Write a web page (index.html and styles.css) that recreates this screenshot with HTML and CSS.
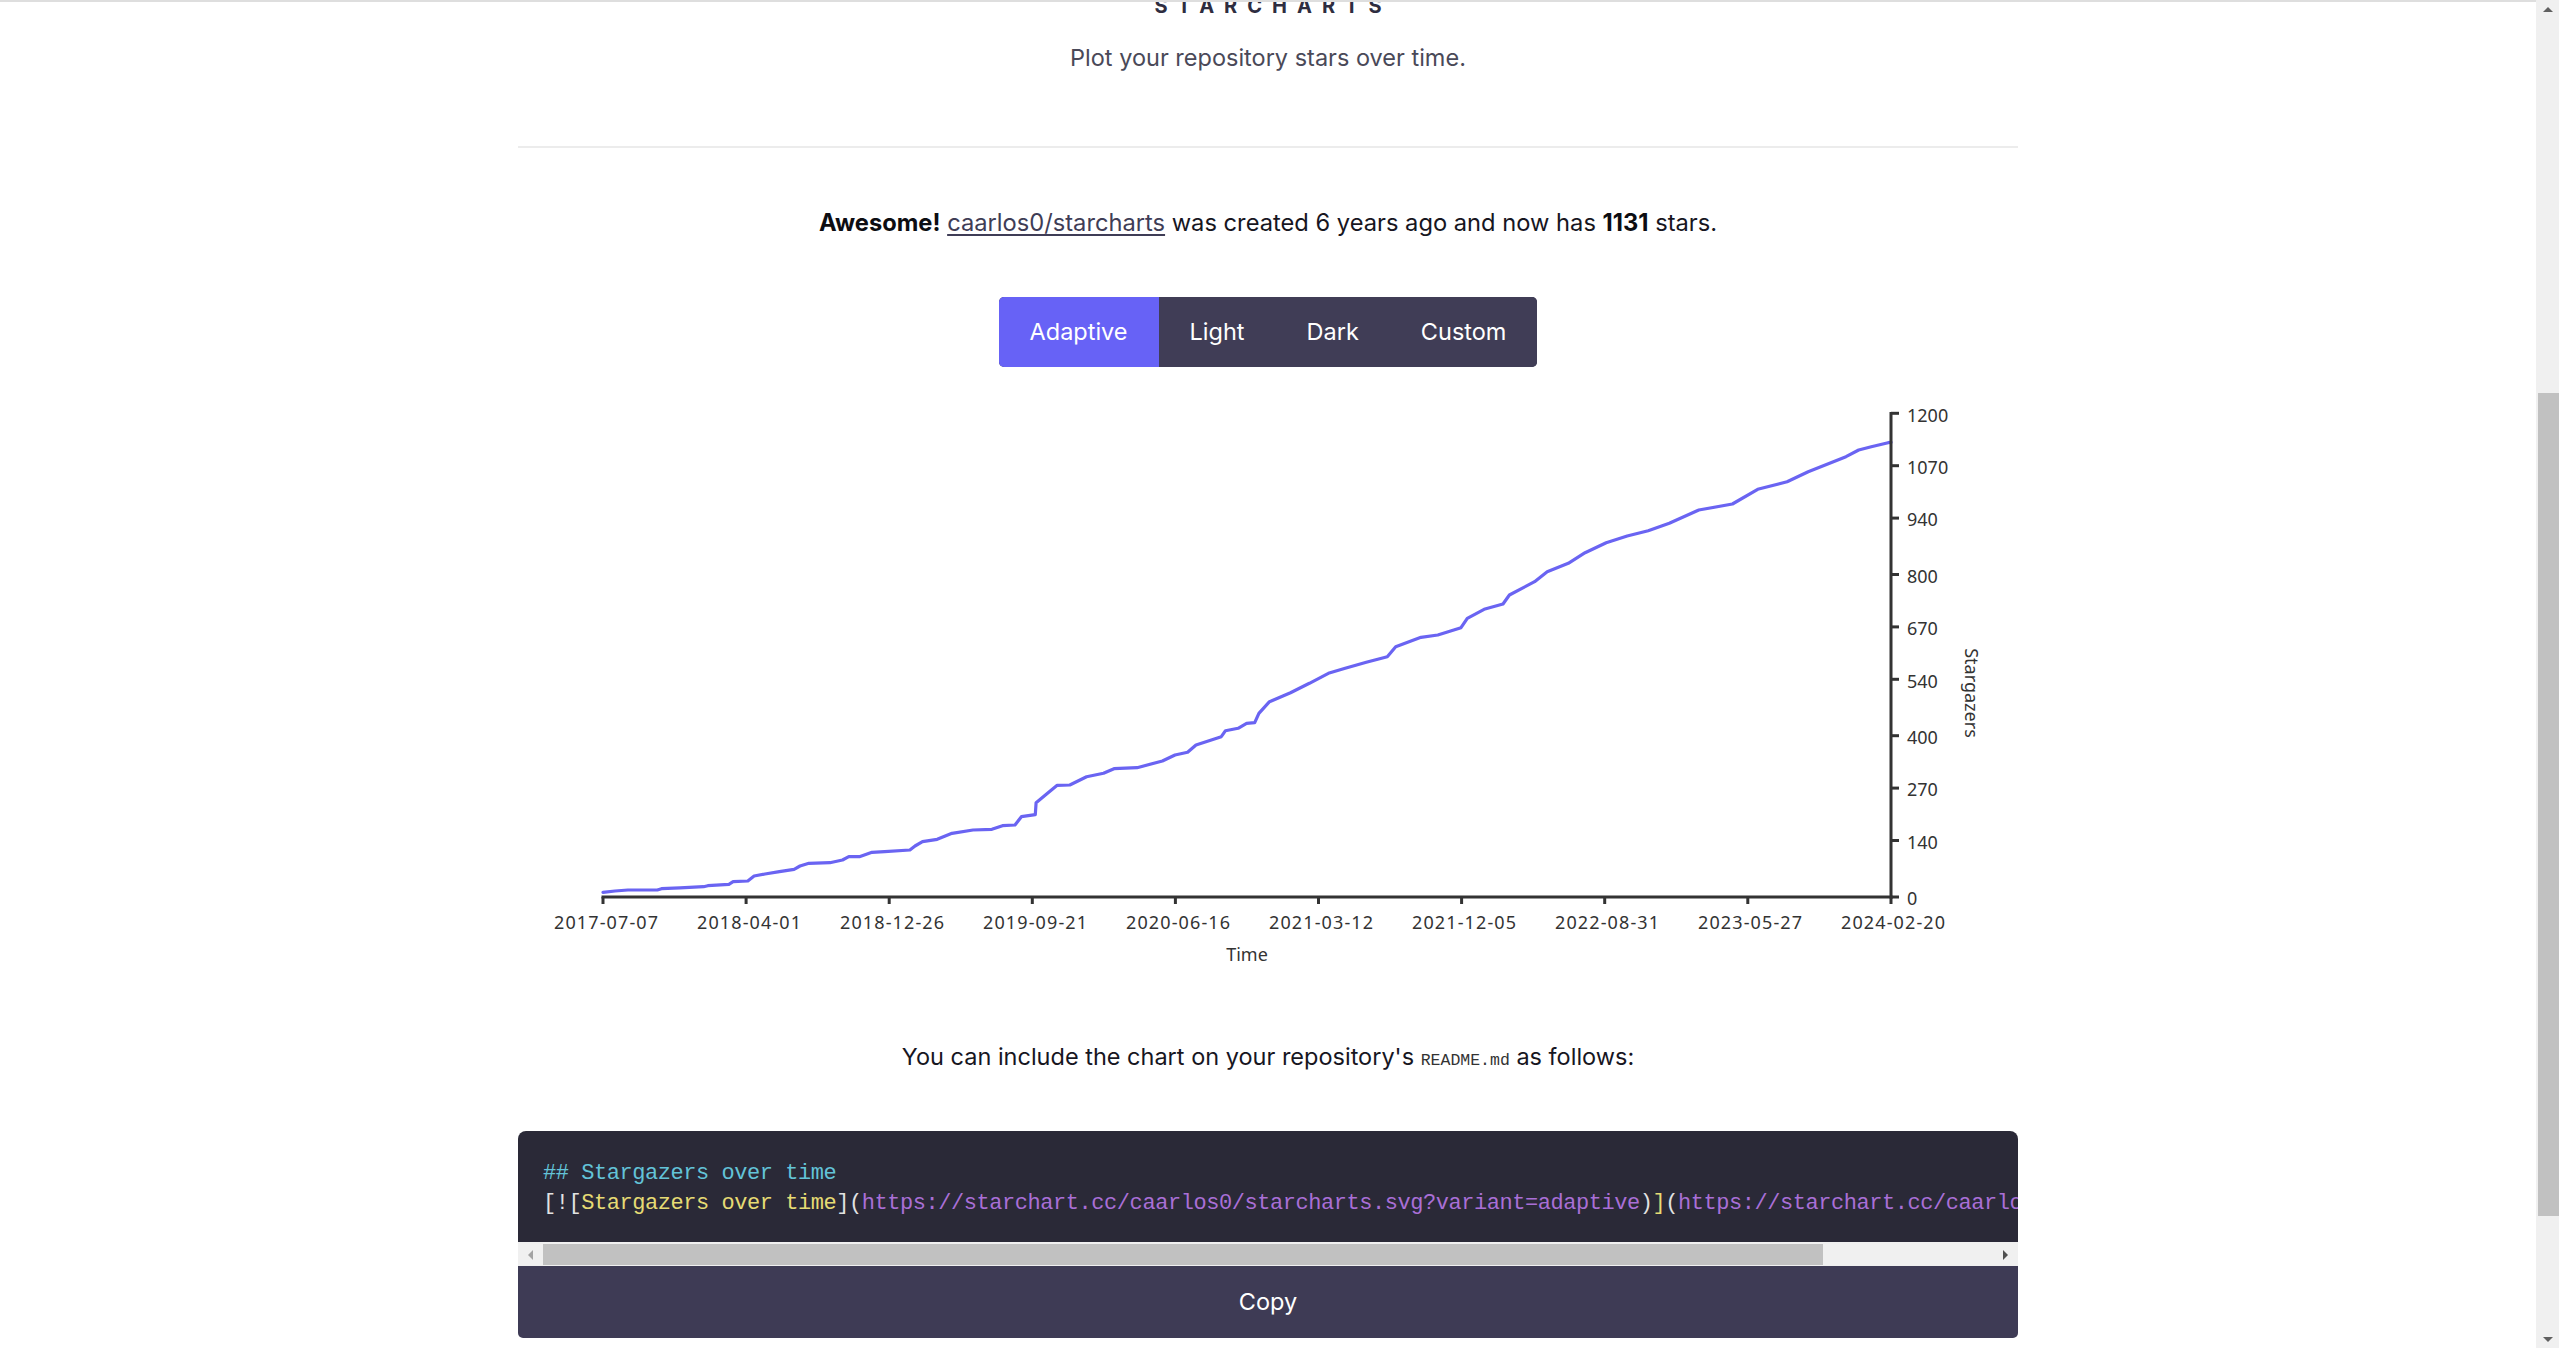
FILE: index.html
```html
<!DOCTYPE html>
<html lang="en">
<head>
<meta charset="utf-8">
<title>Starcharts</title>
<link rel="stylesheet" href="styles.css">
</head>
<body>
<div class="window">
  <main class="page">
    <div class="container">
      <header class="header">
        <h1 class="title">Starcharts</h1>
        <p class="subtitle">Plot your repository stars over time.</p>
      </header>
      <hr class="divider">
      <p class="summary"><strong>Awesome!</strong> <a href="#" class="repo-link">caarlos0/starcharts</a> was created 6 years ago and now has <strong>1131</strong> stars.</p>
      <div class="variants">
        <button class="variant active">Adaptive</button>
        <button class="variant">Light</button>
        <button class="variant">Dark</button>
        <button class="variant">Custom</button>
      </div>
      <svg class="chart" viewBox="518 400 1500 570" width="1500" height="570" xmlns="http://www.w3.org/2000/svg">
        <polyline class="series" points="603,892.3 615,891 627.9,890 657.3,890 661.5,888.7 680,887.8 703.6,886.7 707.8,885.7 728.9,884.3 733.1,881.7 747.8,881 754.1,876 765,874 779.4,871.7 794.1,869.3 800,866 808.9,863.3 829.9,862.7 842.5,860 848.8,856.7 859.4,856.7 872,852.3 884.6,851.7 909.9,850 915,846 922.5,841.7 937.2,839.3 952,833.3 973,830 991.9,829.3 1002.5,825.7 1015,825 1021.4,816.7 1035.3,814.7 1036.1,802.7 1046.6,794 1057.2,785.3 1069.8,785 1086.6,776.7 1103.5,773.3 1114,768.7 1137.1,767.7 1162.4,761 1175,755 1187.6,752.3 1196,745 1221.3,736.7 1225.5,730.7 1238.1,728.3 1246.6,723.3 1254.7,722.7 1258.9,713.3 1269.5,701.7 1290.5,692.7 1309.4,683.3 1328.4,673.3 1345.2,668.3 1366.3,662.3 1387.3,656.7 1395.7,646.7 1421,637.3 1437.8,635 1461,627.7 1467.3,618.3 1484.1,609.3 1503,604 1509.4,595 1534.6,581.7 1547.2,571.7 1568.3,563.3 1585.1,552.7 1606.2,542.7 1627.2,536 1648.2,530.7 1669.3,523.3 1698.8,510 1732.4,504 1757.7,489.3 1787.1,481.7 1808.2,471.7 1846,456.7 1858.7,450 1871.3,446.7 1888.1,442.7 1891,442.3"/>
        <g class="axis">
          <line x1="601.5" y1="897" x2="1892.5" y2="897"/>
          <line x1="1891" y1="412" x2="1891" y2="898.5"/>
          <line x1="603" y1="897" x2="603" y2="904"/>
          <line x1="746.1" y1="897" x2="746.1" y2="904"/>
          <line x1="889.2" y1="897" x2="889.2" y2="904"/>
          <line x1="1032.3" y1="897" x2="1032.3" y2="904"/>
          <line x1="1175.4" y1="897" x2="1175.4" y2="904"/>
          <line x1="1318.5" y1="897" x2="1318.5" y2="904"/>
          <line x1="1461.6" y1="897" x2="1461.6" y2="904"/>
          <line x1="1604.7" y1="897" x2="1604.7" y2="904"/>
          <line x1="1747.8" y1="897" x2="1747.8" y2="904"/>
          <line x1="1891" y1="897" x2="1891" y2="904"/>
          <line x1="1891" y1="413.3" x2="1899" y2="413.3"/>
          <line x1="1891" y1="465.7" x2="1899" y2="465.7"/>
          <line x1="1891" y1="518.1" x2="1899" y2="518.1"/>
          <line x1="1891" y1="574.5" x2="1899" y2="574.5"/>
          <line x1="1891" y1="626.9" x2="1899" y2="626.9"/>
          <line x1="1891" y1="679.3" x2="1899" y2="679.3"/>
          <line x1="1891" y1="735.7" x2="1899" y2="735.7"/>
          <line x1="1891" y1="788.1" x2="1899" y2="788.1"/>
          <line x1="1891" y1="840.5" x2="1899" y2="840.5"/>
          <line x1="1891" y1="897" x2="1899" y2="897"/>
        </g>
        <g class="labels ylabels">
          <text x="1907" y="422">1200</text>
          <text x="1907" y="474">1070</text>
          <text x="1907" y="526">940</text>
          <text x="1907" y="583">800</text>
          <text x="1907" y="635">670</text>
          <text x="1907" y="688">540</text>
          <text x="1907" y="744">400</text>
          <text x="1907" y="796">270</text>
          <text x="1907" y="849">140</text>
          <text x="1907" y="905">0</text>
        </g>
        <g class="labels xlabels">
          <text x="606" y="929" textLength="104" lengthAdjust="spacing">2017-07-07</text>
          <text x="749" y="929" textLength="104" lengthAdjust="spacing">2018-04-01</text>
          <text x="892" y="929" textLength="104" lengthAdjust="spacing">2018-12-26</text>
          <text x="1035" y="929" textLength="104" lengthAdjust="spacing">2019-09-21</text>
          <text x="1178" y="929" textLength="104" lengthAdjust="spacing">2020-06-16</text>
          <text x="1321" y="929" textLength="104" lengthAdjust="spacing">2021-03-12</text>
          <text x="1464" y="929" textLength="104" lengthAdjust="spacing">2021-12-05</text>
          <text x="1607" y="929" textLength="104" lengthAdjust="spacing">2022-08-31</text>
          <text x="1750" y="929" textLength="104" lengthAdjust="spacing">2023-05-27</text>
          <text x="1893" y="929" textLength="104" lengthAdjust="spacing">2024-02-20</text>
          <text x="1247" y="961">Time</text>
        </g>
        <text class="labels ytitle" transform="translate(1965 693) rotate(90)">Stargazers</text>
      </svg>
      <p class="include">You can include the chart on your repository's <code class="inline-code">README.md</code> as follows:</p>
      <div class="snippet">
        <pre class="code"><span class="c-head">## Stargazers over time</span>
<span class="c-punct">[![</span><span class="c-text">Stargazers over time</span><span class="c-punct">](</span><span class="c-url">https://starchart.cc/caarlos0/starcharts.svg?variant=adaptive</span><span class="c-punct">)</span><span class="c-text">]</span><span class="c-punct">(</span><span class="c-url">https://starchart.cc/caarlos0/starcharts</span><span class="c-punct">)</span></pre>
        <div class="hscroll">
          <span class="harrow left"></span>
          <span class="hthumb"></span>
          <span class="hfill"></span>
          <span class="harrow right"></span>
        </div>
        <button class="copy">Copy</button>
      </div>
    </div>
  </main>
  <div class="vscroll">
    <span class="varrow up"></span>
    <span class="vgap"></span>
    <span class="vthumb"></span>
    <span class="vfill"></span>
    <span class="varrow down"></span>
  </div>
</div>
</body>
</html>
```
FILE: styles.css
```css
* { box-sizing: border-box; }

html, body {
  margin: 0;
  padding: 0;
  background: #ffffff;
}

body {
  font-family: "Inter", "Noto Sans", sans-serif;
  color: #17161f;
  font-size: 23.5px;
}

.window {
  display: flex;
  height: 1348px;
  overflow: hidden;
}

.page {
  flex: 1;
  min-width: 0;
  overflow: hidden;
  border-top: 2px solid #dedede;
}

.container {
  width: 1500px;
  margin: 0 auto;
  text-align: center;
}

.title {
  margin: -8px 0 0;
  font-size: 20px;
  line-height: 24px;
  font-weight: 700;
  letter-spacing: 10px;
  text-transform: uppercase;
  color: #2e2d40;
  padding-left: 10px;
}

.subtitle {
  margin: 25px 0 0;
  font-size: 23.5px;
  line-height: 30px;
  color: #4a4958;
}

.divider {
  margin: 73px 0 0;
  border: 0;
  height: 2px;
  background: #ececec;
}

.summary {
  margin: 60px 0 0;
  font-size: 23.7px;
  line-height: 30px;
  color: #17161f;
}

.summary strong { font-weight: 700; color: #0d0d12; }

.repo-link {
  color: #3f3d56;
  text-decoration: underline;
  text-underline-offset: 3px;
}

.variants {
  display: inline-flex;
  margin-top: 59px;
  border-radius: 5px;
  overflow: hidden;
  background: #403d56;
  vertical-align: top;
}

.variant {
  border: 0;
  margin: 0;
  padding: 20px 31px;
  font-family: inherit;
  font-size: 23.5px;
  line-height: 30px;
  color: #ffffff;
  background: #403d56;
}

.variant.active { background: #6762f6; }

.chart {
  display: block;
  margin-top: 33px;
}

.series {
  fill: none;
  stroke: #6a64f2;
  stroke-width: 3.2;
  stroke-linejoin: round;
  stroke-linecap: round;
}

.axis line {
  stroke: #333333;
  stroke-width: 3;
}

.labels {
  font-family: "Noto Sans", "Open Sans", sans-serif;
  font-size: 18px;
  fill: #333333;
}

.xlabels text { text-anchor: middle; }
.ytitle { text-anchor: middle; }

.include {
  margin: 72px 0 0;
  font-size: 23.5px;
  line-height: 30px;
  color: #17161f;
}

.inline-code {
  font-family: "Liberation Mono", monospace;
  font-size: 16.5px;
  line-height: 1;
  color: #333;
}

.snippet {
  margin-top: 59px;
  border-radius: 8px 8px 5px 5px;
  overflow: hidden;
  text-align: left;
}

.code {
  margin: 0;
  padding: 28px 25px 23px;
  background: #2a2937;
  font-family: "Liberation Mono", monospace;
  font-size: 22px;
  letter-spacing: -0.45px;
  line-height: 30px;
  white-space: pre;
  overflow: hidden;
  color: #e6e6e6;
}

.c-head { color: #63c3d8; }
.c-punct { color: #e2e2e2; }
.c-text { color: #e6db74; }
.c-url { color: #a96fd6; }

.hscroll {
  display: flex;
  align-items: stretch;
  height: 24px;
  background: #f0f0f0;
  padding: 2px 0 1px;
}

.harrow {
  width: 25px;
  display: flex;
  align-items: center;
  justify-content: center;
}

.harrow::before {
  content: "";
  border-top: 5px solid transparent;
  border-bottom: 5px solid transparent;
}

.harrow.left::before { border-right: 5px solid #a3a3a3; }
.harrow.right::before { border-left: 5px solid #505050; }

.hthumb {
  width: 1280px;
  background: #c1c1c1;
}

.hfill { flex: 1; }

.copy {
  display: block;
  width: 100%;
  border: 0;
  margin: 0;
  padding: 21px 0;
  font-family: inherit;
  font-size: 23.5px;
  line-height: 30px;
  color: #ffffff;
  background: #3e3b55;
}

.vscroll {
  width: 23px;
  display: flex;
  flex-direction: column;
  background: #f0f0f0;
}

.varrow {
  height: 18px;
  display: flex;
  align-items: center;
  justify-content: center;
}

.varrow::before {
  content: "";
  border-left: 5px solid transparent;
  border-right: 5px solid transparent;
}

.varrow.up::before { border-bottom: 5px solid #606060; }
.varrow.down::before { border-top: 5px solid #606060; }

.vgap { height: 375px; }

.vthumb {
  height: 823px;
  margin-left: 2px;
  background: #c1c1c1;
}

.vfill { flex: 1; }
```
